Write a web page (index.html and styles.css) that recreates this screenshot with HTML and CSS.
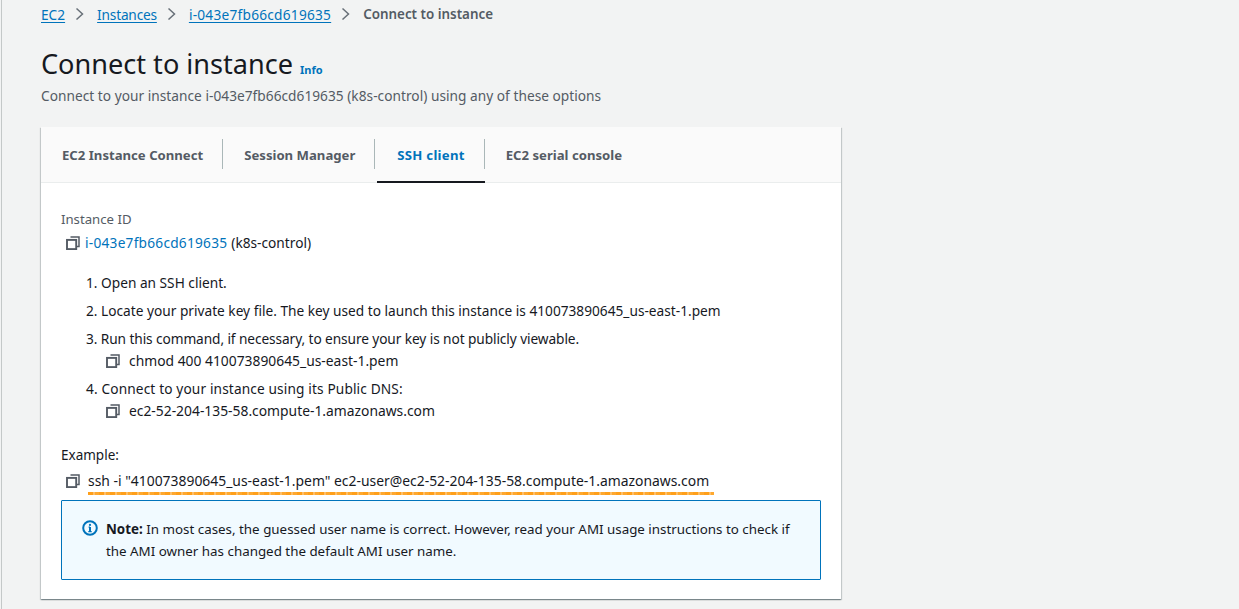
FILE: index.html
```html
<!DOCTYPE html>
<html lang="en">
<head>
<meta charset="utf-8">
<title>Connect to instance</title>
<link rel="stylesheet" href="styles.css">
</head>
<body>
<svg class="defs" width="0" height="0" aria-hidden="true">
  <symbol id="copy" viewBox="0 0 14 14">
    <path d="M4.5 1h8.5v9.4h-2.8" fill="none" stroke="currentColor" stroke-width="1.5"/>
    <rect x="1" y="3.9" width="9.2" height="9.2" fill="none" stroke="currentColor" stroke-width="1.9"/>
  </symbol>
  <symbol id="chev" viewBox="0 0 10 14">
    <path d="M1.5 1.5 7.5 7l-6 5.5" fill="none" stroke="currentColor" stroke-width="1.5"/>
  </symbol>
</svg>
<main class="page">
  <nav class="crumbs">
    <a class="link" href="#">EC2</a><svg class="chev"><use href="#chev"/></svg>
    <a class="link crumb-instances" href="#">Instances</a><svg class="chev"><use href="#chev"/></svg>
    <a class="link inst-id" href="#">i-043e7fb66cd619635</a><svg class="chev"><use href="#chev"/></svg>
    <span class="crumb-current">Connect to instance</span>
  </nav>
  <header class="head">
    <div class="title-row"><h1>Connect to instance</h1><a class="info" href="#">Info</a></div>
    <p class="subtitle">Connect to your instance i-043e7fb66cd619635 (k8s-control) using any of these options</p>
  </header>
  <section class="card">
    <div class="tabs">
      <div class="tab">EC2 Instance Connect</div>
      <div class="tab">Session Manager</div>
      <div class="tab active">SSH client</div>
      <div class="tab last">EC2 serial console</div>
    </div>
    <div class="body">
      <div class="label">Instance ID</div>
      <div class="id-row"><svg class="copy"><use href="#copy"/></svg><a class="plain-link inst-id" href="#">i-043e7fb66cd619635</a><span class="after-link">(k8s-control)</span></div>
      <ol class="steps">
        <li>1. Open an SSH client.</li>
        <li>2. Locate your private key file. The key used to launch this instance is 410073890645_us-east-1.pem</li>
        <li class="s3">3. Run this command, if necessary, to ensure your key is not publicly viewable.
          <div class="cmd"><svg class="copy"><use href="#copy"/></svg><span>chmod 400 410073890645_us-east-1.pem</span></div>
        </li>
        <li class="s4">4. Connect to your instance using its Public DNS:
          <div class="cmd"><svg class="copy"><use href="#copy"/></svg><span>ec2-52-204-135-58.compute-1.amazonaws.com</span></div>
        </li>
      </ol>
      <div class="label example">Example:</div>
      <div class="ex-row"><svg class="copy"><use href="#copy"/></svg><span class="ex-code">ssh -i "410073890645_us-east-1.pem" ec2-user@ec2-52-204-135-58.compute-1.amazonaws.com</span></div>
      <div class="note">
        <svg class="note-icon" viewBox="0 0 16 16"><circle cx="8" cy="8" r="6.8" fill="none" stroke="currentColor" stroke-width="2"/><path d="M8 7v4.4" stroke="currentColor" stroke-width="2"/><path d="M6.3 11.6h3.4M6.6 7.2H8" stroke="currentColor" stroke-width="1.2"/><circle cx="8" cy="4.9" r="1.1" fill="currentColor"/></svg>
        <p><strong>Note:</strong> In most cases, the guessed user name is correct. However, read your AMI usage instructions to check if the AMI owner has changed the default AMI user name.</p>
      </div>
    </div>
  </section>
</main>
</body>
</html>
```
FILE: styles.css
```css
* { box-sizing: border-box; }
html, body { height: 100%; }
body {
  margin: 0;
  height: 609px;
  overflow: hidden;
  background: #f2f3f3;
  color: #16191f;
  font-family: "Noto Sans", "Liberation Sans", sans-serif;
  font-size: 13.7px;
}
.defs { display: block; height: 0; }
.page {
  height: 609px;
  margin-left: 1px;
  border-left: 1px solid #c4c8c8;
  padding: 5px 0 0 39px;
}
.crumbs { display: flex; align-items: center; height: 18px; }
.link { color: #0073bb; text-decoration: underline; text-underline-offset: 2px; }
.crumb-instances { letter-spacing: -.2px; }
.inst-id { letter-spacing: .24px; }
.chev { width: 10px; height: 14px; margin: 0 12px 0 10px; color: #687078; }
.crumb-current { color: #545b64; font-weight: 600; font-size: 13.4px; }
.head { margin-top: 24px; }
.title-row { display: flex; align-items: baseline; height: 34px; }
h1 { margin: 0; font-size: 27.1px; font-weight: 400; line-height: 34px; }
.info { margin-left: 7px; color: #0073bb; font-size: 11px; font-weight: 700; text-decoration: none; }
.subtitle { margin: 6px 0 0; color: #545b64; line-height: 18px; letter-spacing: .025px; }
.card {
  width: 800px;
  height: 472px;
  margin-top: 22px;
  background: #fff;
  box-shadow: 0 1px 1px rgba(0, 28, 36, .3), 1px 1px 1px rgba(0, 28, 36, .15), -1px 1px 1px rgba(0, 28, 36, .15);
}
.tabs { display: flex; height: 56px; background: #fafafa; border-bottom: 1px solid #eaeded; }
.tab {
  position: relative;
  padding: 0 20px 0 21px;
  height: 56px;
  line-height: 56px;
  color: #545b64;
  font-weight: 700;
  font-size: 13.15px;
}
.tab::after {
  content: "";
  position: absolute;
  right: 0;
  top: 12px;
  height: 30px;
  border-right: 1px solid #aab7b8;
}
.tab.last::after { display: none; }
.tab.active { padding-left: 22px; color: #0073bb; letter-spacing: .28px; }
.tab.active::before {
  content: "";
  position: absolute;
  left: 2px;
  right: 0;
  bottom: 0;
  height: 2px;
  background: #16191f;
}
.body { padding: 27px 20px 0; }
.label { color: #545b64; line-height: 18px; font-size: 13.2px; }
.id-row { display: flex; align-items: center; margin-top: 6px; padding-left: 5px; line-height: 18px; }
.copy { width: 14px; height: 14px; flex: none; color: #545b64; }
.plain-link { margin-left: 5px; color: #0073bb; text-decoration: none; }
.after-link { margin-left: 4px; }
.steps { list-style: none; margin: 22px 0 0; padding: 0 0 0 25px; }
.steps li { line-height: 18px; margin-bottom: 10px; }
.steps .s3 { letter-spacing: -.09px; }
.steps .s4 { letter-spacing: .13px; }
.cmd { display: flex; align-items: center; margin-top: 4px; padding-left: 20px; letter-spacing: 0; }
.cmd span { margin-left: 9px; color: #16191f; font-size: 13.85px; }
.example { color: #16191f; margin-top: 26px; font-size: 13.5px; }
.ex-row { position: relative; display: flex; align-items: center; margin-top: 8px; padding-left: 5px; line-height: 18px; }
.ex-code { margin-left: 8px; font-size: 13.9px; }
.ex-row::after {
  content: "";
  position: absolute;
  left: 27px;
  width: 626px;
  bottom: -5px;
  height: 3px;
  background: repeating-linear-gradient(90deg, #ff9f1a 0 5px, #ffbe66 5px 7px, #ffa82e 7px 11px);
}
.note {
  display: flex;
  width: 760px;
  height: 80px;
  margin-top: 10px;
  padding: 17px 20px 0;
  background: #f1faff;
  border: 1px solid #0073bb;
  border-radius: 1px;
  font-size: 13.36px;
}
.note-icon { width: 16px; height: 16px; flex: none; margin: 2px 8px 0 0; color: #0073bb; }
.note p { margin: 0; line-height: 22px; }
```
